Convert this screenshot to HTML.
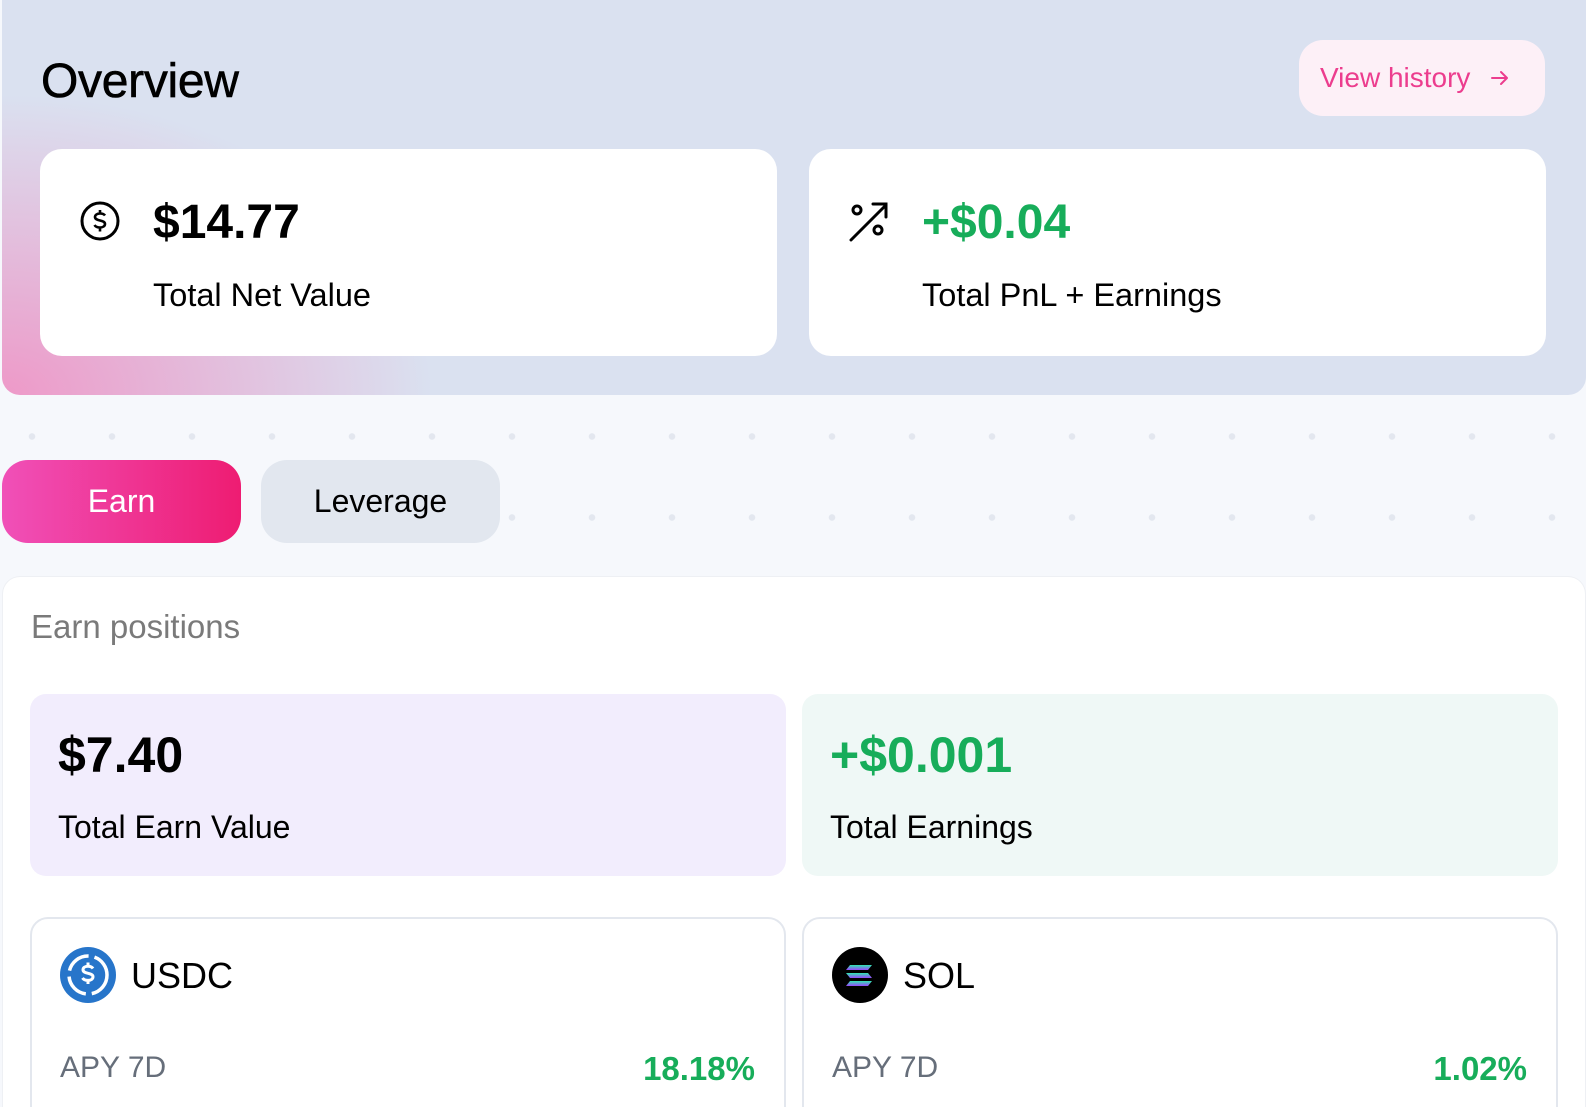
<!DOCTYPE html>
<html style="height:1107px;overflow:hidden"><head><meta charset="utf-8"><style>
*{box-sizing:border-box;margin:0;padding:0}
html,body{height:1107px;overflow:hidden}
body{width:1586px;background:#f6f8fc;font-family:"Liberation Sans",sans-serif;color:#000;position:relative}
.top{position:absolute;left:2px;top:0;width:1584px;height:395px;border-radius:0 0 18px 18px;background:radial-gradient(ellipse 430px 300px at 0% 100%,#ee99c8 0%,#e6b2d6 35%,rgba(218,224,240,0) 100%),#dae1f0}
h1{position:absolute;left:41px;top:54px;font-size:48px;font-weight:normal;letter-spacing:-0.3px;-webkit-text-stroke:0.6px #000}
.vh{position:absolute;left:1299px;top:40px;width:246px;height:76px;border-radius:24px;background:#fdf0f7;color:#ec3d8e;font-size:28px;display:flex;align-items:center;padding-left:21px}
.card{position:absolute;top:149px;width:737px;height:207px;background:#fff;border-radius:22px}
.big{position:absolute;left:113px;top:46px;font-size:48px;font-weight:700}
.lbl{position:absolute;left:113px;top:128px;font-size:32.5px}
.dots{position:absolute;left:0;top:396px;width:1586px;height:162px;background-image:radial-gradient(circle,#e3e7ef 3px,transparent 3.5px);background-size:80px 81px;background-position:-8px 0}
.tab{position:absolute;top:460px;width:239px;height:83px;border-radius:26px;font-size:32px;display:flex;align-items:center;justify-content:center}
.panel{position:absolute;left:2px;top:576px;width:1584px;height:531px;overflow:hidden;background:#fff;border-radius:18px 18px 0 0;border:1px solid #eef0f4;border-bottom:none}
.ep{position:absolute;left:28px;top:31px;font-size:33px;color:#7a7a7a}
.sum{position:absolute;top:117px;width:756px;height:182px;border-radius:16px}
.sum .b{position:absolute;left:28px;top:32px;font-size:50px;font-weight:700}
.sum .l{position:absolute;left:28px;top:115px;font-size:32px}
.asset{position:absolute;top:340px;width:756px;height:240px;border:2px solid #e3e7ee;border-radius:18px}
.asset .n{position:absolute;left:99px;top:36px;font-size:36px}
.asset .a{position:absolute;left:28px;top:132px;font-size:30px;color:#666e7a}
.asset .v{position:absolute;right:29px;top:131px;font-size:33px;color:#17ad5a;font-weight:700}
.g{color:#17ad5a}
</style></head><body>
<div class="top"></div>
<h1>Overview</h1>
<div class="vh">View history <svg width="24" height="24" viewBox="0 0 24 24" style="margin-left:18px" fill="none" stroke="#ec3d8e" stroke-width="2" stroke-linecap="round" stroke-linejoin="round"><path d="M4 12h15M13 6l6 6-6 6"/></svg></div>
<div class="card" style="left:40px">
<svg style="position:absolute;left:39px;top:51px" width="42" height="42" viewBox="0 0 42 42" fill="none" stroke="#000" stroke-width="3"><circle cx="21" cy="21" r="18"/><path d="M26 15.5c-1-1.5-3-2-5-2-3 0-5 1.5-5 3.5 0 4.5 10 2.5 10 7 0 2-2 3.5-5 3.5-2.5 0-4.5-.8-5.5-2.5M21 10v3.5M21 27.5v4" stroke-width="2.6"/></svg>
<div class="big">$14.77</div><div class="lbl">Total Net Value</div></div>
<div class="card" style="left:809px">
<svg style="position:absolute;left:39px;top:51px" width="42" height="42" viewBox="0 0 42 42" fill="none" stroke="#000" stroke-width="3" stroke-linecap="round"><circle cx="9" cy="10" r="4"/><circle cx="30" cy="30" r="4"/><path d="M3 40L38 5M25 4h13v13"/></svg>
<div class="big g">+$0.04</div><div class="lbl">Total PnL + Earnings</div></div>
<div class="dots"></div>
<div class="tab" style="left:2px;background:linear-gradient(90deg,#f050b8,#ee1c72);color:#fff;font-weight:500">Earn</div>
<div class="tab" style="left:261px;background:#e2e7ef;font-weight:500">Leverage</div>
<div class="panel">
<div class="ep">Earn positions</div>
<div class="sum" style="left:27px;background:#f2edfd"><div class="b">$7.40</div><div class="l">Total Earn Value</div></div>
<div class="sum" style="left:799px;background:#eff8f6"><div class="b g">+$0.001</div><div class="l">Total Earnings</div></div>
<div class="asset" style="left:27px">
<svg style="position:absolute;left:28px;top:28px" width="56" height="56" viewBox="0 0 56 56"><circle cx="28" cy="28" r="28" fill="#2775ca"/><circle cx="28" cy="28" r="19" fill="none" stroke="#fff" stroke-width="3.5" stroke-dasharray="26 6"/><path d="M33 21.5c-1-1.5-3-2.3-5-2.3-3 0-5 1.5-5 3.6 0 4.6 10 2.5 10 7 0 2.1-2 3.6-5 3.6-2.5 0-4.5-.9-5.5-2.5M28 15.5v3.8M28 33v4" fill="none" stroke="#fff" stroke-width="3"/></svg>
<div class="n">USDC</div><div class="a">APY 7D</div><div class="v">18.18%</div></div>
<div class="asset" style="left:799px">
<svg style="position:absolute;left:28px;top:28px" width="56" height="56" viewBox="0 0 56 56"><defs><linearGradient id="sg" x1="0" y1="0" x2="0" y2="1"><stop offset="0" stop-color="#2ee8b0"/><stop offset="1" stop-color="#9a45fe"/></linearGradient></defs><circle cx="28" cy="28" r="28" fill="#000"/><g fill="url(#sg)"><path d="M18 18h22l-4 5H14z"/><path d="M14 26h22l4 5H18z"/><path d="M18 34h22l-4 5H14z"/></g></svg>
<div class="n">SOL</div><div class="a">APY 7D</div><div class="v">1.02%</div></div>
</div>
</body></html>
